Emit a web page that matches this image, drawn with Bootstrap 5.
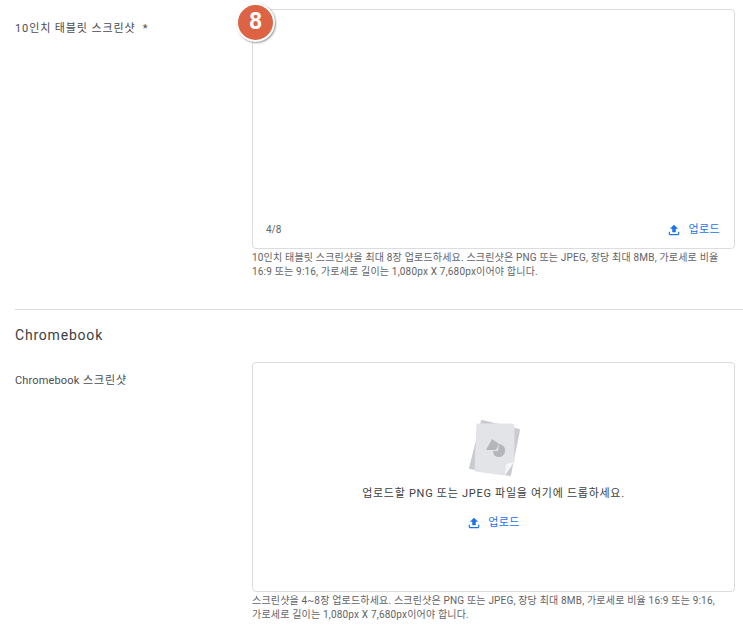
<!DOCTYPE html>
<html lang="ko">
<head>
  <meta charset="UTF-8">
  <title>스크린샷</title>
  <link href="https://cdn.jsdelivr.net/npm/bootstrap@5.3.0/dist/css/bootstrap.min.css" rel="stylesheet">
  <style>
    html, body { height: 630px; overflow: hidden; }
    body { font-family: Roboto, "Noto Sans CJK KR", sans-serif; font-size: 11px; color: #3c4043; background: #fff; }
    .page-wrap { padding: 9px 8px 0 15px; }
    .field-row { display: flex; }
    .field-label { width: 237px; flex: none; padding-top: 12px; font-size: 11px; line-height: 16px; letter-spacing: .9px; color: #4a4d51; }
    .latin-word { letter-spacing: .15px; }
    .field-body { flex: 1; position: relative; }
    .drop-box { border: 1px solid #dadce0; border-radius: 4px; background: #fff; }
    .drop-first { height: 240px; padding: 0 14px 10px 13px; }
    .drop-second { height: 230px; padding-top: 57px; }
    .count-text { font-size: 10px; color: #5f6368; line-height: 16px; }
    .upload-link { color: #1a73e8; font-size: 11px; line-height: 16px; text-decoration: none; letter-spacing: .4px; }
    .upload-link svg { width: 14px; height: 14px; fill: #1a73e8; margin-right: 7px; }
    .help-text { font-size: 10px; line-height: 13.5px; color: #5f6368; margin: 2px 0 0; letter-spacing: .18px; word-break: keep-all; }
    .step-badge { position: absolute; left: -16px; top: -6px; width: 39px; height: 39px; border-radius: 50%; background: #dc6344; border: 2px solid #fff; box-shadow: 1px 1px 2px rgba(0,0,0,.4); color: #fff; font-size: 23px; font-weight: 700; font-family: Roboto, sans-serif; }
    .section-line { border-top: 1px solid #dadce0; margin: 31px -8px 0 0; }
    .section-title { font-size: 14px; line-height: 20px; font-weight: 400; letter-spacing: .8px; color: #3c4043; margin: 15px 0 17px; }
    .second-label { padding-top: 11px; }
    .drop-msg { font-size: 11px; line-height: 16px; color: #3c4043; margin: 8px 0 13px; letter-spacing: .72px; }
    .art-icon { width: 52px; height: 58px; display: block; }
  </style>
</head>
<body>
  <div class="page-wrap">
    <div class="field-row">
      <div class="field-label">10인치 태블릿 스크린샷 &nbsp;*</div>
      <div class="field-body">
        <div class="step-badge d-flex align-items-center justify-content-center">8</div>
        <div class="drop-box drop-first d-flex align-items-end justify-content-between">
          <span class="count-text">4/8</span>
          <a href="#" class="upload-link d-flex align-items-center">
            <svg viewBox="0 0 24 24"><path d="M9 16h6v-6h4l-7-7-7 7h4v6zM19 15v4H5v-4H3v4c0 1.1.9 2 2 2h14c1.1 0 2-.9 2-2v-4z"/></svg>업로드
          </a>
        </div>
        <p class="help-text">10인치 태블릿 스크린샷을 최대 8장 업로드하세요. 스크린샷은 PNG 또는 JPEG, 장당 최대 8MB, 가로세로 비율 16:9 또는 9:16, 가로세로 길이는 1,080px X 7,680px이어야 합니다.</p>
      </div>
    </div>

    <div class="section-line"></div>
    <h2 class="section-title">Chromebook</h2>

    <div class="field-row">
      <div class="field-label second-label"><span class="latin-word">Chromebook</span> 스크린샷</div>
      <div class="field-body">
        <div class="drop-box drop-second d-flex flex-column align-items-center">
          <svg class="art-icon" viewBox="466 420 52 58">
            <path d="M480 421l37 9-9 45-40-7z" fill="#c9cbcf" stroke="#c9cbcf" stroke-width="2" stroke-linejoin="round"/>
            <path d="M475 424h35a2 2 0 0 1 2 2v36l-9 13-30-4z" fill="#e3e4e8" stroke="#e3e4e8" stroke-width="1" stroke-linejoin="round"/>
            <path d="M503 475l9-13-8 2z" fill="#f6f6f8"/>
            <path d="M490 439l-6 11h10l3-6z" fill="#b4b6bb"/>
            <path d="M497 444a6.500 6.500 0 1 1-5 11l-1-4h5z" fill="#b4b6bb"/>
          </svg>
          <div class="drop-msg">업로드할 PNG 또는 JPEG 파일을 여기에 드롭하세요.</div>
          <a href="#" class="upload-link d-flex align-items-center">
            <svg viewBox="0 0 24 24"><path d="M9 16h6v-6h4l-7-7-7 7h4v6zM19 15v4H5v-4H3v4c0 1.1.9 2 2 2h14c1.1 0 2-.9 2-2v-4z"/></svg>업로드
          </a>
        </div>
        <p class="help-text">스크린샷을 4~8장 업로드하세요. 스크린샷은 PNG 또는 JPEG, 장당 최대 8MB, 가로세로 비율 16:9 또는 9:16, 가로세로 길이는 1,080px X 7,680px이어야 합니다.</p>
      </div>
    </div>
  </div>
  <script src="https://cdn.jsdelivr.net/npm/bootstrap@5.3.0/dist/js/bootstrap.bundle.min.js"></script>
</body>
</html>
